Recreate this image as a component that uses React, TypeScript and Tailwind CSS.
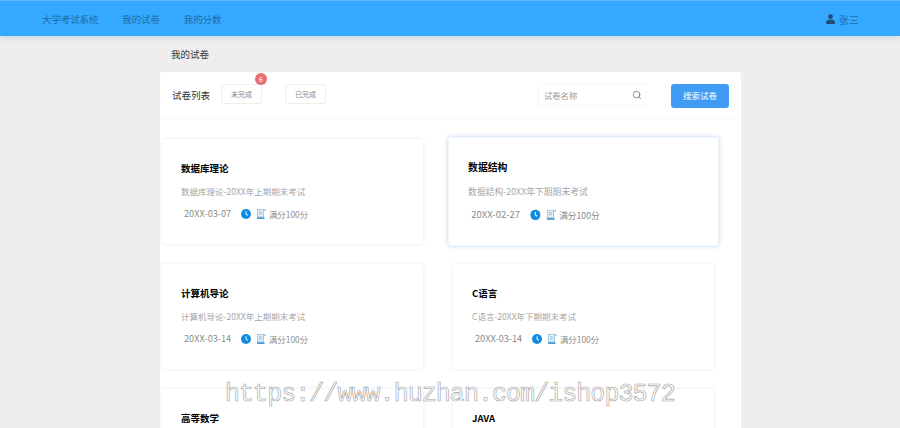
import { Search } from 'lucide-react'

const papers = [
  { title: '数据库理论', desc: '数据库理论-20XX年上期期末考试', date: '20XX-03-07' },
  { title: '数据结构', desc: '数据结构-20XX年下期期末考试', date: '20XX-02-27', hover: true },
  { title: '计算机导论', desc: '计算机导论-20XX年上期期末考试', date: '20XX-03-14' },
  { title: 'C语言', desc: 'C语言-20XX年下期期末考试', date: '20XX-03-14' },
  { title: '高等数学', desc: '高等数学-20XX年上期期末考试', date: '20XX-03-14' },
  { title: 'JAVA', desc: 'JAVA-20XX年下期期末考试', date: '20XX-03-14' },
]

function ClockIcon() {
  return (
    <svg width="10" height="10" viewBox="0 0 10 10" className="shrink-0">
      <circle cx="5" cy="5" r="5" fill="#0f8ce0" />
      <path d="M5 2.4V5.2L7 6.4" fill="none" stroke="#fff" strokeWidth="1" />
    </svg>
  )
}

function DocIcon() {
  return (
    <svg width="9" height="10" viewBox="0 0 9 10" className="shrink-0">
      <rect x="0.5" y="0.5" width="6" height="7.5" fill="#e6f1fa" stroke="#7fb2d8" strokeWidth="0.7" />
      <path d="M2 3H5M2 5H5" stroke="#6aa5d0" strokeWidth="0.7" />
      <rect x="0" y="8.4" width="7.5" height="1.4" fill="#2585c9" />
      <rect x="7.2" y="0.4" width="1.6" height="1.6" fill="#8fc0e4" />
    </svg>
  )
}

function UserIcon() {
  return (
    <svg width="9" height="10" viewBox="0 0 9 10" className="shrink-0">
      <circle cx="4.5" cy="2.6" r="2.4" fill="#1d4f78" />
      <path d="M0 10V8.4C0 6.6 2 5.6 4.5 5.6S9 6.6 9 8.4V10Z" fill="#1d4f78" />
    </svg>
  )
}

function PaperCard({ title, desc, date, hover }: { title: string; desc: string; date: string; hover?: boolean }) {
  return (
    <div className={`h-[105px] bg-white rounded-[2px] flex flex-col pl-[19px] pt-[22px] ${hover ? 'scale-[1.035] shadow-[0_0_4px_rgba(120,170,235,0.5)]' : 'shadow-[0_0_4px_rgba(0,0,0,0.09)]'}`}>
      <div className="h-[14px] leading-[14px] text-[9.5px] font-bold text-black">{title}</div>
      <div className="mt-[9px] h-[14px] leading-[14px] text-[8.5px] text-[#a6a6a6]">{desc}</div>
      <div className="mt-[9px] h-[14px] flex items-center text-[9.2px] text-[#8a8a8a]">
        <span className="ml-[3px] w-[57px]">{date}</span>
        <ClockIcon />
        <span className="ml-[6px]"><DocIcon /></span>
        <span className="ml-[3px] text-[8.4px]">满分100分</span>
      </div>
    </div>
  )
}

export default function App() {
  return (
    <div className="relative h-[428px] w-[900px] overflow-hidden bg-[#eeeeee] font-['Noto_Sans_CJK_SC','Noto_Sans',sans-serif]">
      <header className="relative z-10 h-[36px] bg-[#35a9ff] border-t border-[#5db8fb] shadow-[0_2px_6px_rgba(60,110,170,0.18)] flex items-center pl-[42px] pr-[41px] pt-[1px] text-[9.4px] text-[#1f6ba6]">
        <span>大学考试系统</span>
        <span className="ml-[24px]">我的试卷</span>
        <span className="ml-[24px]">我的分数</span>
        <span className="ml-auto flex items-center gap-[4px]">
          <UserIcon />
          <span className="text-[10px]">张三</span>
        </span>
      </header>

      <main className="ml-[160px] w-[581px]">
        <div className="h-[36px] flex items-center pl-[11px] text-[9.5px] text-[#333]">我的试卷</div>
        <section className="bg-white rounded-t-[3px]">
          <div className="h-[47px] border-b border-[#f8f8f8] flex items-center pl-[12px] pr-[12px]">
            <span className="text-[9.5px] text-[#333] mt-[1px]">试卷列表</span>
            <div className="relative ml-[11px] w-[41px] h-[20px] border border-[#eeeeee] rounded-[2px] flex items-center justify-center text-[7px] text-[#888] -mt-[2px]">
              未完成
              <span className="absolute -top-[12px] -right-[6px] w-[12px] h-[12px] rounded-full bg-[#ea6b73] text-white text-[7px] flex items-center justify-center">6</span>
            </div>
            <div className="ml-[23px] w-[41px] h-[20px] border border-[#eeeeee] rounded-[2px] flex items-center justify-center text-[7px] text-[#888] -mt-[2px]">已完成</div>
            <div className="ml-auto w-[110px] h-[22px] border border-[#f6f6f6] border-r-0 rounded-[2px] flex items-center pl-[5px] pr-[6px] text-[8.3px] text-[#999]">
              <span>试卷名称</span>
              <Search size={10} strokeWidth={1.4} className="ml-auto text-[#444]" />
            </div>
            <button className="ml-[23px] w-[58px] h-[24px] rounded-[3px] bg-[#3f9bf3] text-white text-[8.5px] flex items-center justify-center mt-[1px]">搜索试卷</button>
          </div>
          <div className="grid grid-cols-[261px_261px] gap-x-[30px] gap-y-[20px] pl-[2px] pt-[20px] pb-[20px]">
            {papers.map(p => (
              <PaperCard key={p.title} {...p} />
            ))}
          </div>
        </section>
      </main>

      <div className="absolute left-[225px] top-[378px] z-20 text-[25px] tracking-[-0.95px] leading-[34px] whitespace-nowrap font-['Liberation_Mono',monospace] text-white/50 [-webkit-text-stroke:0.6px_#a0a0a0]">
        https://www.huzhan.com/ishop3572
      </div>
    </div>
  )
}
